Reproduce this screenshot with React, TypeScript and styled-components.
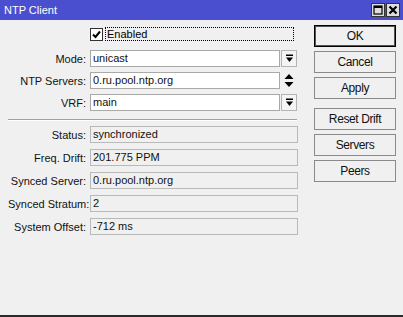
import React from 'react';
import styled, { createGlobalStyle } from 'styled-components';

const Global = createGlobalStyle`
  html, body { margin: 0; padding: 0; background: #f0f0f0; }
  body {
    font-family: "Liberation Sans", Arial, sans-serif;
    font-size: 11px;
    color: #000;
  }
`;

const Window = styled.div`
  width: 403px;
  height: 317px;
  box-sizing: border-box;
  background: #f0f0f0;
  border-bottom: 2px solid #2b2b2b;
  display: flex;
  flex-direction: column;
`;

const TitleBar = styled.div`
  height: 20px;
  background: #4a4fcf;
  display: flex;
  align-items: center;
  padding: 0 3px 0 4px;
  box-sizing: border-box;
`;

const Title = styled.div`
  flex: 1;
  color: #fff;
  font-size: 11px;
`;

const TitleButton = styled.div`
  width: 14px;
  height: 14px;
  box-sizing: border-box;
  border: 1px solid #333;
  background: #dedede;
  display: flex;
  align-items: center;
  justify-content: center;
  margin-left: 1px;
`;

const Body = styled.div`
  display: flex;
  gap: 16px;
  padding: 5px 0 0 8px;
`;

const Form = styled.div`
  width: 290px;
  display: flex;
  flex-direction: column;
  padding-top: 2px;
`;

const Row = styled.div<{ $mt?: number; $h?: number }>`
  display: grid;
  grid-template-columns: 78px 208px;
  column-gap: 4px;
  align-items: center;
  height: ${(p) => p.$h ?? 17}px;
  margin-top: ${(p) => p.$mt ?? 0}px;
`;

const Label = styled.div`
  text-align: right;
  white-space: nowrap;
  color: #111;
`;

const FieldWrap = styled.div`
  display: flex;
  height: 100%;
  gap: 1px;
`;

const Input = styled.div<{ $readOnly?: boolean }>`
  box-sizing: border-box;
  height: 100%;
  width: ${(p) => (p.$readOnly ? '208px' : '190px')};
  border: 1px solid ${(p) => (p.$readOnly ? '#b9b9b9' : '#a9a9a9')};
  background: ${(p) => (p.$readOnly ? '#f0f0f0' : '#fff')};
  padding: 0 2px;
  line-height: 15px;
  white-space: nowrap;
  overflow: hidden;
  color: #111;
`;

const SideControl = styled.div<{ $boxed?: boolean }>`
  box-sizing: border-box;
  width: 16px;
  height: 100%;
  border: 1px solid ${(p) => (p.$boxed ? '#b4b4b4' : 'transparent')};
  background: ${(p) => (p.$boxed ? '#f4f4f4' : 'transparent')};
  display: flex;
  align-items: center;
  justify-content: center;
`;

const CheckCell = styled.div`
  display: flex;
  align-items: center;
  height: 100%;
`;

const CheckBox = styled.div`
  box-sizing: border-box;
  width: 13px;
  height: 13px;
  border: 1px solid #333;
  background: #fff;
  display: flex;
  align-items: center;
  justify-content: center;
`;

const FocusLabel = styled.div`
  box-sizing: border-box;
  flex: 1;
  margin: 0 4px 0 2px;
  height: 14px;
  border: 1px dotted #000;
  padding-left: 1px;
  line-height: 12px;
`;

const Separator = styled.div`
  width: 289px;
  margin-top: 8px;
  border-top: 1px solid #a0a0a0;
  border-bottom: 1px solid #fff;
`;

const Buttons = styled.div`
  width: 82px;
  display: flex;
  flex-direction: column;
  gap: 4px;
`;

const Button = styled.div<{ $default?: boolean; $mt?: number }>`
  box-sizing: border-box;
  height: 22px;
  margin-top: ${(p) => p.$mt ?? 0}px;
  border: 1px solid ${(p) => (p.$default ? '#000' : '#8a8a8a')};
  box-shadow: ${(p) => (p.$default ? 'inset 0 0 0 1px #555' : 'none')};
  background: #f0f0f0;
  display: flex;
  align-items: center;
  justify-content: center;
  font-size: 12px;
  letter-spacing: -0.4px;
  color: #111;
`;

const DropIcon = () => (
  <svg width="9" height="9" viewBox="0 0 9 9">
    <rect x="1" y="0.5" width="7" height="1.5" fill="#000" />
    <polygon points="1,3.5 8,3.5 4.5,8" fill="#000" />
  </svg>
);

const UpDownIcon = () => (
  <svg width="10" height="15" viewBox="0 0 10 15">
    <polygon points="5,1 9.5,6 0.5,6" fill="#000" />
    <polygon points="0.5,9 9.5,9 5,14" fill="#000" />
  </svg>
);

const CheckMark = () => (
  <svg width="9" height="9" viewBox="0 0 9 9">
    <polyline points="1,4.5 3.5,7 8,1.5" fill="none" stroke="#000" strokeWidth="2" />
  </svg>
);

const MaxIcon = () => (
  <svg width="10" height="10" viewBox="0 0 10 10">
    <rect x="1" y="1" width="8" height="8" fill="none" stroke="#000" strokeWidth="1.2" />
    <rect x="1" y="1" width="8" height="2" fill="#000" />
  </svg>
);

const CloseIcon = () => (
  <svg width="10" height="10" viewBox="0 0 10 10">
    <path d="M1.5 1.5 L8.5 8.5 M8.5 1.5 L1.5 8.5" stroke="#000" strokeWidth="2.2" />
  </svg>
);

const editable = [
  { label: 'Mode:', value: 'unicast', control: 'drop' },
  { label: 'NTP Servers:', value: '0.ru.pool.ntp.org', control: 'updown' },
  { label: 'VRF:', value: 'main', control: 'drop' },
];

const status = [
  { label: 'Status:', value: 'synchronized' },
  { label: 'Freq. Drift:', value: '201.775 PPM' },
  { label: 'Synced Server:', value: '0.ru.pool.ntp.org' },
  { label: 'Synced Stratum:', value: '2' },
  { label: 'System Offset:', value: '-712 ms' },
];

export default function App() {
  return (
    <>
      <Global />
      <Window>
        <TitleBar>
          <Title>NTP Client</Title>
          <TitleButton><MaxIcon /></TitleButton>
          <TitleButton><CloseIcon /></TitleButton>
        </TitleBar>
        <Body>
          <Form>
            <Row $h={14}>
              <span />
              <CheckCell>
                <CheckBox><CheckMark /></CheckBox>
                <FocusLabel>Enabled</FocusLabel>
              </CheckCell>
            </Row>
            {editable.map((r, i) => (
              <Row key={r.label} $mt={i === 0 ? 9 : 5}>
                <Label>{r.label}</Label>
                <FieldWrap>
                  <Input>{r.value}</Input>
                  {r.control === 'drop' ? (
                    <SideControl $boxed><DropIcon /></SideControl>
                  ) : (
                    <SideControl><UpDownIcon /></SideControl>
                  )}
                </FieldWrap>
              </Row>
            ))}
            <Separator />
            {status.map((r, i) => (
              <Row key={r.label} $mt={i === 0 ? 5 : 6}>
                <Label>{r.label}</Label>
                <Input $readOnly>{r.value}</Input>
              </Row>
            ))}
          </Form>
          <Buttons>
            <Button $default>OK</Button>
            <Button>Cancel</Button>
            <Button>Apply</Button>
            <Button $mt={5}>Reset Drift</Button>
            <Button>Servers</Button>
            <Button>Peers</Button>
          </Buttons>
        </Body>
      </Window>
    </>
  );
}
